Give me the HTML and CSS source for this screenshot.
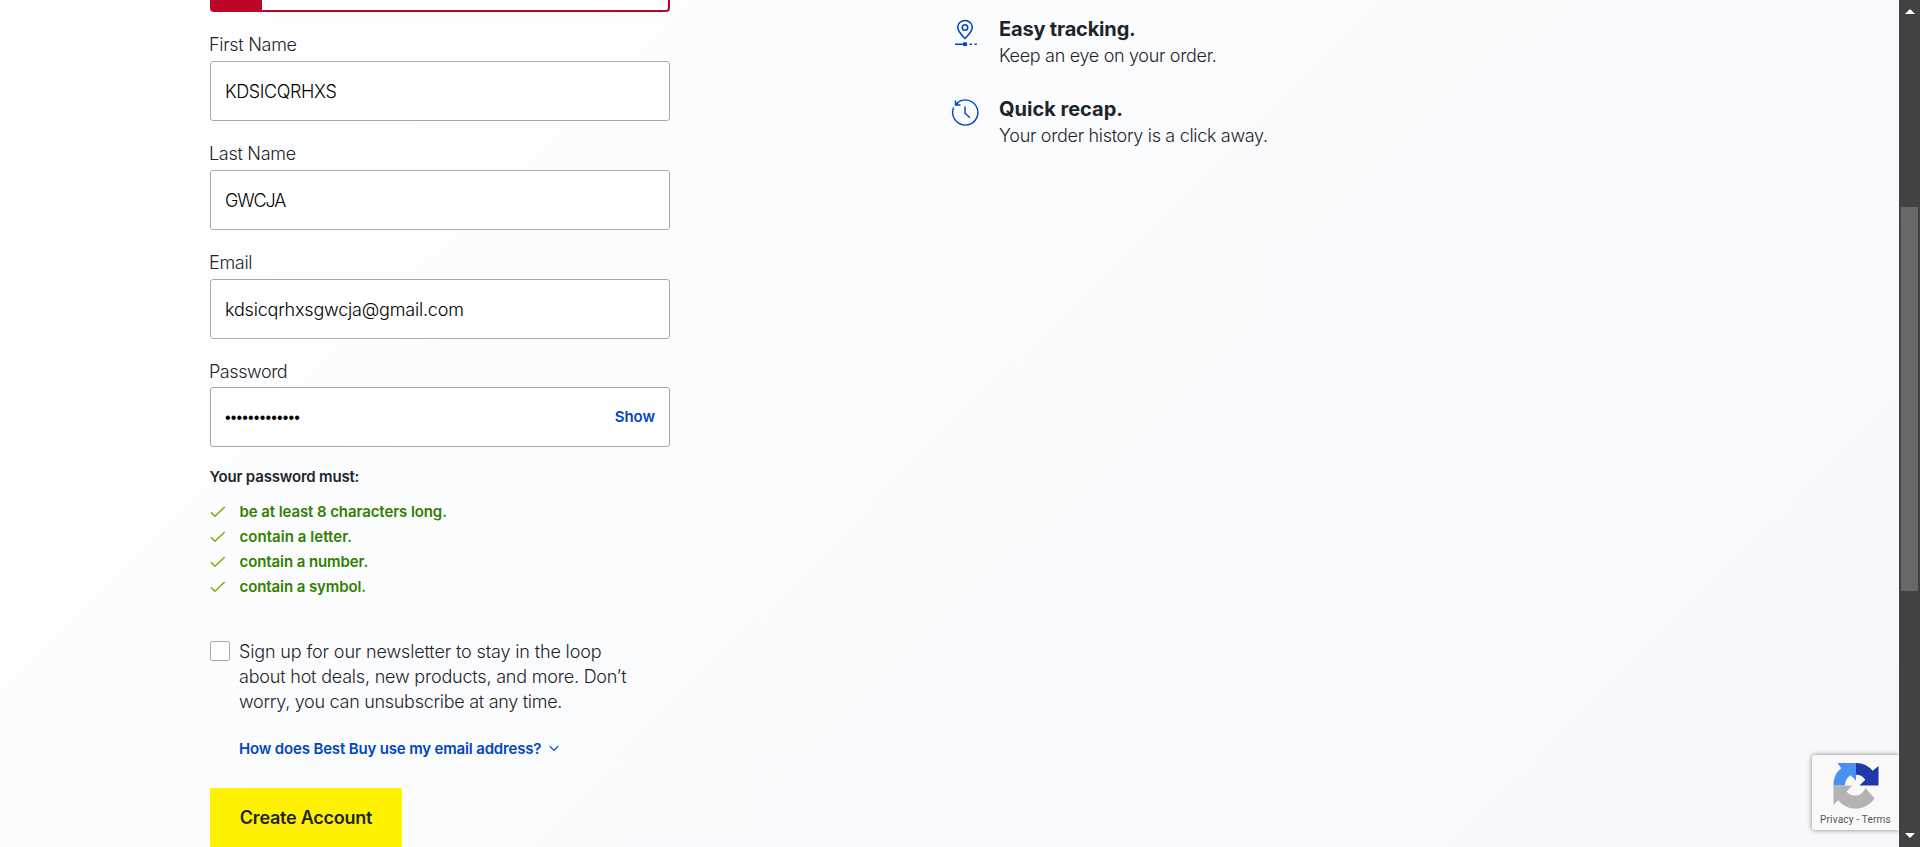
FILE: index.html
```html
<!DOCTYPE html>
<html lang="en">
<head>
<meta charset="utf-8">
<title>Create Account</title>
<link rel="stylesheet" href="styles.css">
</head>
<body>
<main class="page">
  <form class="form">
    <div class="alert"><div class="alert-mark"></div></div>
    <div class="field"><label class="label">First Name</label><div class="box"><span class="v-first">KDSICQRHXS</span></div></div>
    <div class="field"><label class="label">Last Name</label><div class="box"><span class="v-last">GWCJA</span></div></div>
    <div class="field"><label class="label">Email</label><div class="box"><span class="v-email">kdsicqrhxsgwcja@gmail.com</span></div></div>
    <div class="field field-password"><label class="label label-password">Password</label><div class="box"><span class="dots">•••••••••••••</span><a class="show">Show</a></div></div>
    <p class="rules-title">Your password must:</p>
    <ul class="rules">
      <li><svg class="check" viewBox="0 0 16 12"><path d="M1 6.300l3.900 4L14.700 1"/></svg><span>be at least 8 characters long.</span></li>
      <li><svg class="check" viewBox="0 0 16 12"><path d="M1 6.300l3.900 4L14.700 1"/></svg><span class="r-letter">contain a letter.</span></li>
      <li><svg class="check" viewBox="0 0 16 12"><path d="M1 6.300l3.900 4L14.700 1"/></svg><span>contain a number.</span></li>
      <li><svg class="check" viewBox="0 0 16 12"><path d="M1 6.300l3.900 4L14.700 1"/></svg><span>contain a symbol.</span></li>
    </ul>
    <div class="newsletter">
      <span class="checkbox"></span>
      <p class="news-text"><span class="n1">Sign up for our newsletter to stay in the loop</span><br><span class="n2">about hot deals, new products, and more. Don’t</span><br><span class="n3">worry, you can unsubscribe at any time.</span></p>
    </div>
    <a class="how">How does Best Buy use my email address?<svg class="chevron" viewBox="0 0 10 7"><path d="M.8 1.200L5 5.400l4.200-4.200"/></svg></a>
    <button class="create" type="button">Create Account</button>
  </form>
  <section class="perks">
    <div class="perk">
      <svg class="perk-icon" viewBox="0 0 30 30">
        <path d="M15 22.500c-3.200-3.300-7.300-7-7.300-11.200a7.300 6.800 0 0 1 14.600 0c0 4.200-4.100 7.900-7.300 11.200z"/>
        <circle cx="15" cy="11.500" r="2.700"/>
        <path d="M5 28.300h9M19.500 28.300h2.500M24.500 28.300h2.300"/>
        <circle class="solid" cx="15" cy="28.300" r="2.200"/>
      </svg>
      <div><h2 class="perk-title">Easy tracking.</h2><p class="perk-text">Keep an eye on your order.</p></div>
    </div>
    <div class="perk">
      <svg class="perk-icon perk-icon-recap" viewBox="0 0 30 30">
        <path d="M3.700 10.500A12.600 12.600 0 1 0 7 6"/>
        <path d="M15 9.500v6.700l5 4.500"/>
        <path d="M5.500 3.500v4.500h5M5.500 8l2.800-2.500"/>
      </svg>
      <div><h2 class="perk-title perk-title-recap">Quick recap.</h2><p class="perk-text">Your order history is a click away.</p></div>
    </div>
  </section>
  <aside class="captcha">
    <svg class="captcha-logo" viewBox="0 0 46 48">
      <path fill="#4a90f0" d="M23 1v18l-5.500-5.500C14 15.500 12 19 11.500 24H0C0 16 3 10 8 6.500L4 1z"/>
      <path fill="#1c3aa9" d="M23 1c7 0 13 3 17 8l6-5v20H26.500l6-6c-2-3-5-5-9.500-5z"/>
      <path fill="#b3b3b3" d="M0 24h19l-5.500 6c3 5 12 6.500 17 0 1-1 1.500-2 2-3.500L42 37c-9 13.500-28 14-37 2l-5 5z"/>
    </svg>
    <span class="captcha-text">Privacy - Terms</span>
  </aside>
</main>
<div class="scrollbar">
  <svg class="arrow" viewBox="0 0 10 5"><path d="M0 5L5 0l5 5z"/></svg>
  <div class="thumb"></div>
  <svg class="arrow" viewBox="0 0 10 5"><path d="M0 0l5 5 5-5z"/></svg>
</div>
</body>
</html>
```

FILE: styles.css
```css
* { box-sizing: border-box; }
body {
  margin: 0;
  height: 847px;
  overflow: hidden;
  display: flex;
  font-family: Inter, "Liberation Sans", sans-serif;
  font-size: 18px;
  font-weight: 300;
  line-height: 25px;
  color: #1d252c;
}
p, h2, ul { margin: 0; padding: 0; }
.page {
  position: relative;
  flex: 1;
  height: 847px;
  overflow: hidden;
  display: flex;
  padding-left: 210px;
  background: linear-gradient(135deg, #fff 0%, #fafbfd 50%, #f6f8fc 100%);
}
.form { width: 460px; flex: none; }
.alert {
  height: 12px;
  border: 2px solid #bb0628;
  border-top: 0;
  border-radius: 0 0 4px 4px;
  background: #fff;
  margin-bottom: 20px;
}
.alert-mark { width: 50px; height: 10px; background: #bb0628; }
.field { height: 109px; }
.field-password { height: 108px; }
.label { display: block; height: 29px; margin-left: -1px; letter-spacing: -0.3px; }
.label-password { height: 28px; letter-spacing: -0.44px; }
.box {
  height: 60px;
  border: 1px solid #a8aaad;
  border-radius: 3px;
  background: #fff;
  padding: 0 14px;
  display: flex;
  align-items: center;
  justify-content: space-between;
  color: #000;
}
.v-first { letter-spacing: -0.4px; }
.v-last { letter-spacing: -1.1px; }
.v-email { letter-spacing: -0.2px; }
.dots { font: 16px/25px "Liberation Sans", sans-serif; letter-spacing: 0.17px; }
.show { padding-bottom: 2px; font-size: 15px; font-weight: 600; letter-spacing: -0.05px; color: #0046be; }
.rules-title { margin-left: -0.5px; font-size: 15px; line-height: 20px; font-weight: 600; letter-spacing: -0.18px; }
.rules { list-style: none; margin-top: 12px; font-size: 15px; font-weight: 600; letter-spacing: -0.09px; color: #318000; }
.rules li { display: flex; align-items: center; height: 25px; }
.r-letter { letter-spacing: 0.05px; }
.check { width: 16px; height: 12px; margin-right: 13.5px; fill: none; stroke: #7bb000; stroke-width: 1.5; }
.newsletter { display: flex; margin-top: 40px; }
.checkbox { width: 20px; height: 20px; margin: 2px 9px 0 0; border: 1px solid #a8aaad; border-radius: 2px; background: #fff; }
.news-text { white-space: nowrap; }
.n1 { letter-spacing: -0.14px; }
.n2 { letter-spacing: -0.2px; }
.n3 { letter-spacing: -0.29px; }
.how {
  display: flex;
  align-items: center;
  margin: 24px 0 0 29px;
  height: 20px;
  font-size: 15px;
  font-weight: 600;
  letter-spacing: -0.16px;
  color: #0046be;
}
.chevron { width: 10px; height: 7px; margin-left: 8px; fill: none; stroke: #0046be; stroke-width: 1.2; }
.create {
  display: block;
  width: 192px;
  height: 60px;
  margin-top: 30px;
  padding: 0 0 2px;
  border: 0;
  border-radius: 2px;
  background: #fff200;
  font: 600 18px/25px Inter, sans-serif;
  letter-spacing: -0.24px;
  color: #1d252c;
}
.perks { padding: 16px 0 0 280px; }
.perk { display: flex; height: 80px; }
.perk-icon { width: 30px; height: 30px; margin-right: 19px; fill: none; stroke: #0046be; stroke-width: 1.6; }
.perk-icon-recap { margin-top: 1px; stroke-width: 1.4; }
.perk-icon .solid { fill: #0046be; stroke: none; }
.perk-title { font-size: 20px; line-height: 27px; font-weight: 700; letter-spacing: -0.18px; }
.perk-title-recap { letter-spacing: 0; }
.perk-text { line-height: 25px; letter-spacing: -0.32px; white-space: nowrap; }
.captcha {
  position: absolute;
  right: 0;
  bottom: 17px;
  width: 87px;
  height: 75px;
  padding-top: 7px;
  border-radius: 3px 0 0 3px;
  background: #f9f9f9;
  box-shadow: 0 0 5px #808080;
}
.captcha-logo { display: block; width: 46px; height: 47px; margin-left: 21px; }
.captcha-text { display: block; margin: 1px 0 0 8px; font: 10px/20px Roboto, sans-serif; letter-spacing: 0.2px; color: #555; white-space: nowrap; }
.scrollbar {
  width: 21px;
  height: 847px;
  padding: 9px 0;
  display: flex;
  flex-direction: column;
  align-items: center;
  background: #424242;
}
.arrow { width: 10px; height: 5px; fill: #fff; flex: none; }
.thumb { width: 17px; height: 384px; margin: 193px 0 auto; background: #686868; }
```
